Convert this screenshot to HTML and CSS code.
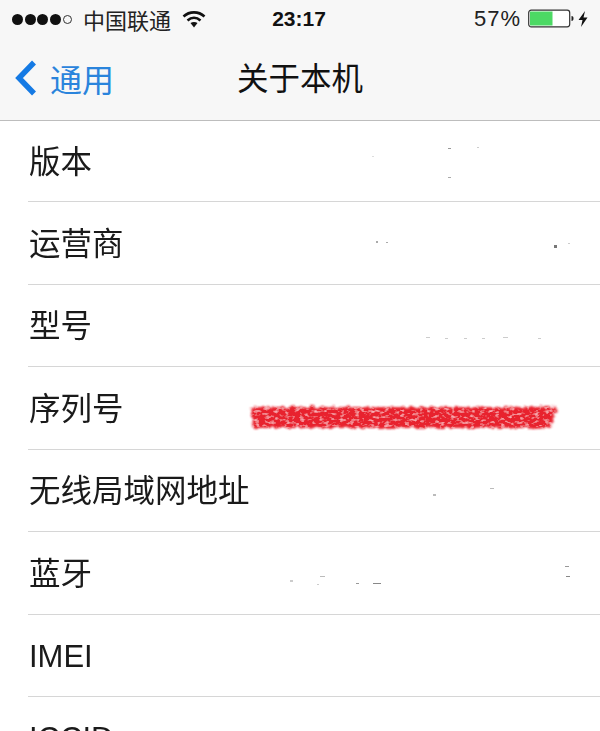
FILE: index.html
```html
<!DOCTYPE html>
<html lang="zh-CN">
<head>
<meta charset="utf-8">
<title>关于本机</title>
<link rel="stylesheet" href="styles.css">
</head>
<body>
<div class="screen">
  <header class="top">
    <div class="status">
      <div class="status-left">
        <span class="signal"><i class="on"></i><i class="on"></i><i class="on"></i><i class="on"></i><i class="off"></i></span>
        <span class="carrier">中国联通</span>
        <svg class="wifi" width="24" height="18" viewBox="0 0 24 18"><path d="M1.500 6.500C7.500 1 16.500 1 22.500 6.500" fill="none" stroke="#111" stroke-width="2.600"/><path d="M5.500 10.500C9.500 7 14.500 7 18.500 10.500" fill="none" stroke="#111" stroke-width="2.600"/><path d="M8.500 13 12 17.500 15.500 13C13.500 11.500 10.500 11.500 8.500 13Z" fill="#111"/></svg>
      </div>
      <span class="time">23:17</span>
      <div class="status-right">
        <span class="percent">57%</span>
        <svg class="battery" width="62" height="20" viewBox="0 0 62 20"><rect x="0.700" y="1.200" width="41" height="16.600" rx="2.500" fill="#fff" stroke="#333" stroke-width="1.200"/><rect x="2" y="2.500" width="22.500" height="14" fill="#4cd964"/><path d="M43.500 7v5c1.600-.3 2-1.200 2-2.500S45.100 7.300 43.500 7Z" fill="#222"/><path d="M57 2 50.500 11H54.500L53 18 59.500 8.500H55.500Z" fill="#111"/></svg>
      </div>
    </div>
    <nav class="nav">
      <a class="back">
        <svg width="26" height="40" viewBox="0 0 26 40"><path d="M21 4.500 6 20 21 35.500" fill="none" stroke="#157ae4" stroke-width="5.500"/></svg>
        <span>通用</span>
      </a>
      <h1 class="title">关于本机</h1>
    </nav>
  </header>
  <main class="list">
    <div class="row">版本
      <svg class="specks" viewBox="0 0 600 82"><rect x="372" y="35" width="2" height="1" fill="#ddd"/><rect x="448" y="27" width="3" height="1" fill="#999"/><rect x="448" y="56" width="3" height="1" fill="#aaa"/><rect x="477" y="26" width="2" height="1" fill="#ccc"/></svg>
    </div>
    <div class="row">运营商
      <svg class="specks" viewBox="0 0 600 82"><rect x="376" y="39" width="2" height="2" fill="#aaa"/><rect x="386" y="40" width="2" height="1" fill="#aaa"/><rect x="554" y="43" width="3" height="3" fill="#777"/><rect x="568" y="41" width="2" height="1" fill="#ccc"/></svg>
    </div>
    <div class="row">型号
      <svg class="specks" viewBox="0 0 600 82"><rect x="426" y="52" width="4" height="1" fill="#ccc"/><rect x="445" y="53" width="3" height="1" fill="#ccc"/><rect x="464" y="53" width="3" height="1" fill="#ccc"/><rect x="482" y="53" width="3" height="1" fill="#ccc"/><rect x="503" y="52" width="5" height="1" fill="#ccc"/><rect x="538" y="53" width="3" height="1" fill="#ccc"/></svg>
    </div>
    <div class="row">序列号
      <svg class="scribble" width="320" height="36" viewBox="0 0 320 36">
        <defs>
          <filter id="rough" x="-5%" y="-30%" width="110%" height="160%">
            <feTurbulence type="fractalNoise" baseFrequency="0.2 0.35" numOctaves="2" seed="4" result="noise"/>
            <feDisplacementMap in="SourceGraphic" in2="noise" scale="6" result="edge"/>
            <feGaussianBlur in="edge" stdDeviation="1.200" result="soft"/>
            <feColorMatrix in="noise" type="matrix" values="0 0 0 0 1  0 0 0 0 0.55  0 0 0 0 0.6  2.500 0 0 0 -1.300" result="flecks"/>
            <feComposite in="flecks" in2="soft" operator="in" result="inner"/>
            <feMerge><feMergeNode in="soft"/><feMergeNode in="inner"/></feMerge>
          </filter>
        </defs>
        <path d="M6 8H312L305 29H8Z" fill="#e8202e" filter="url(#rough)"/>
      </svg>
    </div>
    <div class="row">无线局域网地址
      <svg class="specks" viewBox="0 0 600 82"><rect x="433" y="44" width="3" height="2" fill="#bbb"/><rect x="490" y="38" width="4" height="1" fill="#bbb"/></svg>
    </div>
    <div class="row">蓝牙
      <svg class="specks" viewBox="0 0 600 82"><rect x="290" y="48" width="3" height="2" fill="#ccc"/><rect x="320" y="44" width="5" height="1" fill="#bbb"/><rect x="317" y="52" width="2" height="1" fill="#ccc"/><rect x="356" y="51" width="3" height="1" fill="#999"/><rect x="373" y="51" width="8" height="1" fill="#888"/><rect x="565" y="34" width="4" height="1" fill="#999"/><rect x="566" y="44" width="4" height="1" fill="#888"/></svg>
    </div>
    <div class="row row-latin">IMEI</div>
    <div class="row row-latin">ICCID</div>
  </main>
</div>
</body>
</html>
```
FILE: styles.css
```css
html, body {
  margin: 0;
  padding: 0;
  background: #fff;
}
.screen {
  width: 600px;
  height: 731px;
  overflow: hidden;
  font-family: "Liberation Sans", "Noto Sans CJK SC", sans-serif;
  color: #111;
  filter: blur(0.4px);
}
.top {
  background: #f7f7f7;
  border-bottom: 1px solid #bdbdbd;
  height: 120px;
}
.status {
  height: 38px;
  padding: 0 10px 0 12px;
  display: grid;
  grid-template-columns: 1fr auto 1fr;
  align-items: center;
  font-size: 22px;
}
.status-left {
  display: flex;
  align-items: center;
}
.signal {
  display: flex;
  align-items: center;
  gap: 1.500px;
  width: 66px;
  margin-right: 5px;
}
.signal i {
  width: 11px;
  height: 11px;
  border-radius: 50%;
  box-sizing: border-box;
}
.signal .on { background: #111; }
.signal .off {
  width: 9px;
  height: 9px;
  border: 1px solid #333;
  margin-left: 1px;
}
.carrier {
  color: #222;
  font-size: 22px;
}
.wifi { margin-left: 11px; }
.time {
  font-weight: 700;
  font-size: 21px;
  margin-right: 4px;
}
.status-right {
  display: flex;
  align-items: center;
  justify-content: flex-end;
  gap: 7px;
}
.percent {
  font-size: 22px;
  color: #222;
  letter-spacing: 1px;
}
.nav {
  position: relative;
  height: 82px;
  display: flex;
  align-items: center;
  justify-content: center;
  padding-bottom: 6px;
  box-sizing: border-box;
}
.back {
  position: absolute;
  left: 13px;
  top: 1px;
  height: 78px;
  display: flex;
  align-items: center;
  gap: 11px;
  color: #2a84dc;
  font-size: 32px;
}
.title {
  margin: 0;
  font-weight: 400;
  font-size: 31.500px;
  color: #111;
}
.row {
  position: relative;
  box-sizing: border-box;
  height: 82.500px;
  margin-left: 28px;
  padding-left: 1px;
  padding-bottom: 4px;
  border-bottom: 1px solid #d6d6d6;
  display: flex;
  align-items: center;
  font-size: 31.500px;
  color: #1a1a1a;
}
.row:first-child {
  height: 81px;
}
.row-latin {
  font-size: 31px;
  padding-bottom: 0;
  padding-top: 3px;
}
.specks {
  position: absolute;
  left: -28px;
  top: 0;
  width: 600px;
  height: 82px;
}
.scribble {
  position: absolute;
  left: 217px;
  top: 32px;
}
```
